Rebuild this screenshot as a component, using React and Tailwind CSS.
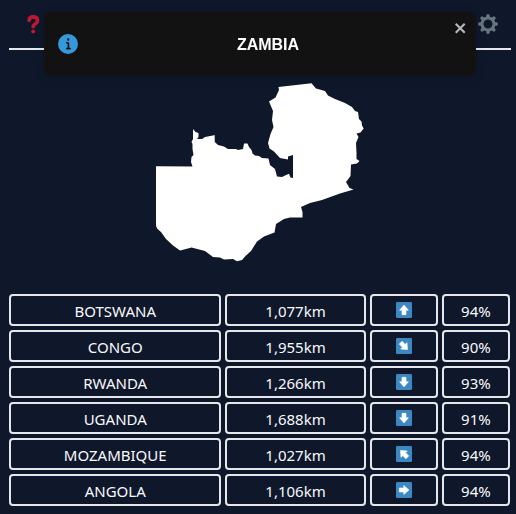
const guesses = [
  { country: "BOTSWANA", distance: "1,077km", angle: 0, direction: "North", proximity: "94%" },
  { country: "CONGO", distance: "1,955km", angle: 135, direction: "South-east", proximity: "90%" },
  { country: "RWANDA", distance: "1,266km", angle: 180, direction: "South", proximity: "93%" },
  { country: "UGANDA", distance: "1,688km", angle: 180, direction: "South", proximity: "91%" },
  { country: "MOZAMBIQUE", distance: "1,027km", angle: 315, direction: "North-west", proximity: "94%" },
  { country: "ANGOLA", distance: "1,106km", angle: 90, direction: "East", proximity: "94%" },
];

const teeth = [0, 45, 90, 135, 180, 225, 270, 315];

function QuestionIcon() {
  return (
    <svg viewBox="0 0 20 20" className="size-5" aria-hidden="true">
      <path
        d="M6.1 6.3C6.3 3.8 8 2.9 10.2 2.9c2.6 0 4.4 1.4 4.4 3.7 0 3.5-4.4 3.2-4.4 6.2"
        fill="none"
        stroke="#be1931"
        strokeWidth="3.6"
        strokeLinecap="round"
      />
      <circle cx="10.2" cy="17.6" r="2" fill="#be1931" />
    </svg>
  );
}

function GearIcon() {
  return (
    <svg viewBox="0 0 20 20" className="size-5" aria-hidden="true">
      <circle cx="10" cy="10" r="6" fill="none" stroke="#66757f" strokeWidth="3" />
      {teeth.map((a) => (
        <path key={a} d="M8 3.6 L8.6 0.6 Q10 -0.6 11.4 0.6 L12 3.6z" fill="#66757f" transform={`rotate(${a} 10 10)`} />
      ))}
    </svg>
  );
}

function ArrowIcon({ angle, label }) {
  return (
    <svg viewBox="0 0 36 36" className="size-4" role="img" aria-label={label}>
      <rect width="36" height="36" rx="3" fill="#3b88c3" />
      <path d="M18 7 L28 18.5 H22.5 V28.5 H13.5 V18.5 H8z" fill="#fff" stroke="#fff" strokeWidth="1.4" strokeLinejoin="round" transform={`rotate(${angle} 18 18)`} />
    </svg>
  );
}

function Toast() {
  return (
    <div
      role="alert"
      className="fixed top-3 right-10 left-11 flex min-h-16 items-start rounded bg-[#121212] p-2 text-white shadow-[0_1px_10px_rgba(0,0,0,0.1),0_2px_15px_rgba(0,0,0,0.05)]"
    >
      <div className="flex flex-1 items-center gap-[10px] self-center px-[6px]">
        <svg viewBox="0 0 24 24" className="size-5 shrink-0" fill="#3498db" aria-hidden="true">
          <path d="M12 0a12 12 0 1012 12A12.013 12.013 0 0012 0zm.25 5a1.5 1.5 0 11-1.5 1.5 1.5 1.5 0 011.5-1.5zm2.25 13.5h-4a1 1 0 010-2h.75a.25.25 0 00.25-.25v-4.5a.25.25 0 00-.25-.25h-.75a1 1 0 010-2h1a2 2 0 012 2v4.75a.25.25 0 00.25.25h.75a1 1 0 110 2z" />
        </svg>
        <p className="flex-1 pt-0.5 text-center font-['Liberation_Sans',Arial,sans-serif] text-base font-bold">ZAMBIA</p>
      </div>
      <button type="button" aria-label="Close" className="opacity-70">
        <svg viewBox="0 0 14 16" className="h-4 w-[14px]" fill="#fff" aria-hidden="true">
          <path d="M7.71 8.23l3.75 3.75-1.48 1.48-3.75-3.75-3.75 3.75L1 11.98l3.75-3.75L1 4.48 2.48 3l3.75 3.75L9.98 3l1.48 1.48-3.75 3.75z" />
        </svg>
      </button>
    </div>
  );
}

function CountryShape() {
  return (
    <svg viewBox="156 83 208 179" className="w-52" fill="#fff" role="img" aria-label="Country outline">
      <path d="M156 166.3 L192.5 166.5 191 162 191.5 157 193.5 155 192.5 149 192.5 144 191.5 142 193 139 193 129 195.5 132 198.5 133 198.5 137 197 139 202 139 205 137 213 135.5 214.6 135 214.8 142 218 145 224 146.5 228 149 236 149 238 150 243 149 244 143.5 247.5 143.5 249 147 251.5 150 252.5 153.5 255 155.5 259 156 262 158 268.5 158.5 270 165 275 169 277 176.5 282 177 285 175.5 289 173.8 290.5 177.5 293 178 293 155 288 156.5 288 159.5 280 158 274 151.5 269.5 148.5 268 143 270.5 134 273.5 127 272 120 273 111 269 101.5 275.5 97.5 279 90 278.5 87 311.5 83.2 316 88.5 325 91 328 95.5 335 99 345 103 352 107 355 111 358 112 359 119 361.5 121.5 362 125.5 363.7 128.5 360.5 132.5 356.5 133.5 358.5 137 356 143 356.5 153 356.5 159 359.5 161 357 163.5 351 164.5 350.5 176 346 182 349.5 188 353.5 189.5 340 193.5 322 200 310 203 301 207 302.5 212 302.5 217.5 290 217.5 284 219 276 224 274.5 232.5 264 236.5 257 241.5 251 251 245.5 256 242 260 237 261.2 233 259 224 259.5 220 257.5 213 257 205 251 191.5 247.5 186 249 180 250.5 173 245.5 166 239 161 232 157.5 229 156 226z" />
    </svg>
  );
}

const cell = "flex h-8 items-center justify-center rounded border-2 border-gray-200";

export default function App() {
  return (
    <div className="min-h-screen bg-slate-900 pr-[5px] pl-[9px] font-['Noto_Sans',sans-serif] text-[15px] text-slate-50">
      <header className="flex h-[50px] items-center justify-between border-b-2 border-gray-200 pr-[13px] pl-[14px]">
        <button type="button" aria-label="How to play">
          <QuestionIcon />
        </button>
        <button type="button" aria-label="Settings">
          <GearIcon />
        </button>
      </header>
      <main>
        <div className="flex justify-center pt-[33px] pb-8">
          <CountryShape />
        </div>
        <table className="block w-full pr-px">
          <tbody className="flex flex-col gap-1">
            {guesses.map((g) => (
              <tr key={g.country} className="grid grid-cols-7 gap-1">
                <td className={`${cell} col-span-3 pt-0.5`}>{g.country}</td>
                <td className={`${cell} col-span-2 pt-0.5`}>{g.distance}</td>
                <td className={cell}>
                  <ArrowIcon angle={g.angle} label={g.direction} />
                </td>
                <td className={`${cell} pt-0.5`}>{g.proximity}</td>
              </tr>
            ))}
          </tbody>
        </table>
      </main>
      <Toast />
    </div>
  );
}
